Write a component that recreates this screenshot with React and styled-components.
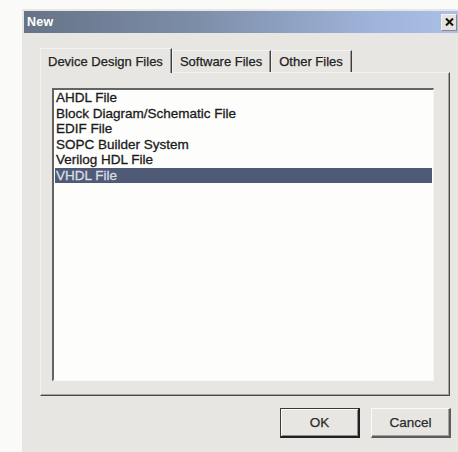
import styled, { createGlobalStyle } from 'styled-components';

const GlobalStyle = createGlobalStyle`
  html, body {
    margin: 0;
    padding: 0;
    background: #fafaf9;
    overflow: hidden;
  }
  body {
    font-family: "Liberation Sans", Arial, sans-serif;
  }
`;

const Window = styled.div`
  margin: 9px 0 0 22px;
  width: 438px;
  height: 445px;
  padding: 2px;
  box-sizing: border-box;
  background: #e8e6e2;
`;

const TitleBar = styled.div`
  height: 22px;
  display: flex;
  align-items: center;
  justify-content: space-between;
  background: linear-gradient(90deg, #667387 0%, #7d8ea9 40%, #9fb3d9 80%, #abc0e8 100%);
`;

const TitleText = styled.span`
  padding-left: 3px;
  color: #fff;
  font-size: 12.5px;
  font-weight: 700;
  letter-spacing: 0.2px;
`;

const CloseButton = styled.button`
  width: 16px;
  height: 17px;
  margin-right: 1px;
  padding: 0;
  border: none;
  border-top: 1px solid #f4f2ee;
  border-left: 1px solid #f4f2ee;
  border-right: 1px solid #8a8a8a;
  border-bottom: 1px solid #8a8a8a;
  background: #e6e3de;
  display: flex;
  align-items: center;
  justify-content: center;
`;

const TabStrip = styled.div`
  display: flex;
  align-items: flex-end;
  margin-top: 15px;
  padding-left: 16px;
`;

const Tab = styled.div`
  position: relative;
  z-index: ${({ $active }) => ($active ? 2 : 1)};
  height: ${({ $active }) => ($active ? 25 : 22)}px;
  margin-bottom: ${({ $active }) => ($active ? -1 : 0)}px;
  padding: 0 8px 0 7px;
  box-sizing: border-box;
  display: flex;
  align-items: center;
  border-top: 1px solid #f3f2ef;
  border-left: 1px solid #f3f2ef;
  border-right: 1px solid #3f3f3f;
  box-shadow: inset -1px 0 #9a9a9a;
  background: #e8e6e2;
  color: #222;
  font-size: 13px;
  white-space: nowrap;
  -webkit-text-stroke: 0.25px currentColor;
`;

const TabPanel = styled.div`
  margin: 0 8px 0 16px;
  height: 324px;
  box-sizing: border-box;
  padding: 15px 15px 14px 11px;
  border-top: 1px solid #f3f2ef;
  border-left: 1px solid #f3f2ef;
  border-right: 1px solid #474747;
  border-bottom: 1px solid #474747;
  box-shadow: inset -1px -1px #a5a5a5;
`;

const ListBox = styled.ul`
  list-style: none;
  margin: 0;
  padding: 0 1px;
  height: 100%;
  box-sizing: border-box;
  background: #fdfdfc;
  border-top: 2px solid #646464;
  border-left: 2px solid #646464;
  border-right: 1px solid #f7f6f3;
  border-bottom: 1px solid #f7f6f3;
`;

const ListItem = styled.li`
  height: 15.5px;
  line-height: 15.5px;
  padding-left: 1px;
  font-size: 13.5px;
  white-space: nowrap;
  color: ${({ $selected }) => ($selected ? '#d9dde6' : '#1a1a1a')};
  background: ${({ $selected }) => ($selected ? '#4f5b76' : 'transparent')};
  -webkit-text-stroke: 0.3px currentColor;
`;

const ButtonRow = styled.div`
  display: flex;
  justify-content: flex-end;
  gap: 11px;
  margin-top: 12px;
  padding-right: 7px;
`;

const Button = styled.button`
  width: 80px;
  height: 30px;
  padding: 0;
  box-sizing: border-box;
  background: #e8e6e2;
  font-family: "Liberation Sans", Arial, sans-serif;
  font-size: 13.5px;
  color: #2b2b2b;
  -webkit-text-stroke: 0.25px currentColor;
  border-style: solid;
  border-width: 1px 2px 2px 1px;
  border-color: ${({ $default }) =>
    $default ? '#3a3a3a #202020 #202020 #3a3a3a' : '#fbfaf7 #5c5c5c #5c5c5c #fbfaf7'};
  box-shadow: ${({ $default }) =>
    $default ? 'inset 1px 1px #fbfaf7, inset -1px -1px #8c8c8c' : 'inset -1px -1px #a2a2a2'};
`;

const files = [
  'AHDL File',
  'Block Diagram/Schematic File',
  'EDIF File',
  'SOPC Builder System',
  'Verilog HDL File',
  'VHDL File',
];

const tabs = ['Device Design Files', 'Software Files', 'Other Files'];

export default function App() {
  return (
    <>
      <GlobalStyle />
      <Window>
        <TitleBar>
          <TitleText>New</TitleText>
          <CloseButton aria-label="Close">
            <svg width="9" height="8" viewBox="0 0 9 8">
              <path d="M1 0.5 L8 7.5 M8 0.5 L1 7.5" stroke="#111" strokeWidth="2" />
            </svg>
          </CloseButton>
        </TitleBar>

        <TabStrip>
          {tabs.map((t, i) => (
            <Tab key={t} $active={i === 0}>
              {t}
            </Tab>
          ))}
        </TabStrip>

        <TabPanel>
          <ListBox>
            {files.map((f) => (
              <ListItem key={f} $selected={f === 'VHDL File'}>
                {f}
              </ListItem>
            ))}
          </ListBox>
        </TabPanel>

        <ButtonRow>
          <Button $default>OK</Button>
          <Button>Cancel</Button>
        </ButtonRow>
      </Window>
    </>
  );
}
